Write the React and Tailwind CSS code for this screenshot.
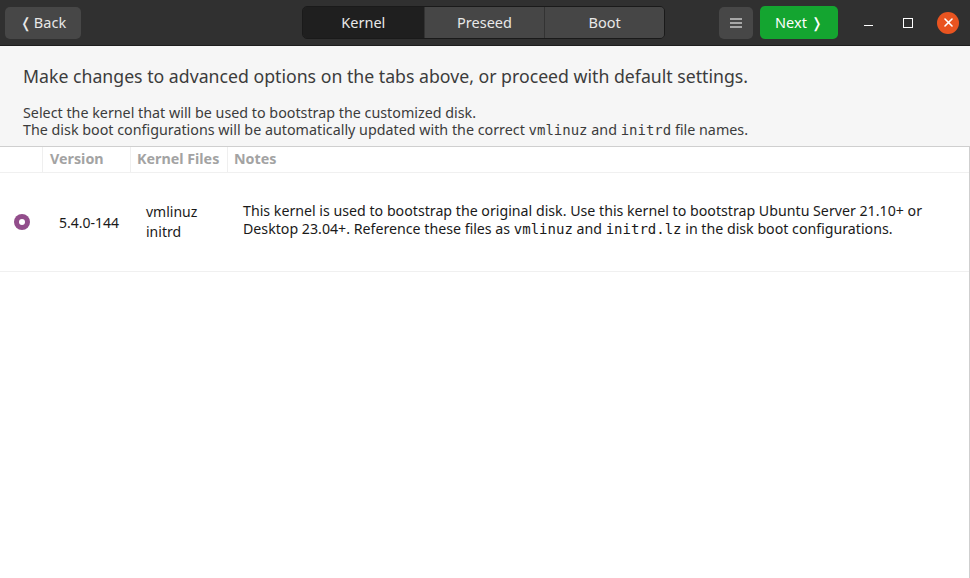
import React from "react";

const mono = { fontFamily: '"DejaVu Sans Mono", "Liberation Mono", monospace' };

function Radio() {
  return (
    <div className="w-4 h-4 rounded-full bg-[#924d8b] flex items-center justify-center">
      <div className="w-[6px] h-[6px] rounded-full bg-white" />
    </div>
  );
}

export default function App() {
  return (
    <div
      className="w-[970px] h-[578px] flex flex-col bg-white overflow-hidden"
      style={{ fontFamily: '"Noto Sans", "Open Sans", sans-serif' }}
    >
      {/* Header bar */}
      <div className="h-[46px] shrink-0 bg-[#303030] border-b border-[#1e1e1e] grid grid-cols-[302px_363px_1fr] items-center">
        <div className="pl-[5px] flex items-center">
          <button className="h-[32px] w-[76px] rounded-[5px] bg-[#474747] text-[#e8e8e8] text-[14.5px] flex items-center justify-center gap-[2px]">
            <span className="text-[14px] leading-none">❬</span>
            <span>Back</span>
          </button>
        </div>
        <div className="flex h-[33px] rounded-[5px] overflow-hidden border border-[#1a1a1a] text-[14.5px] text-[#e8e8e8]">
          <div className="w-[121px] bg-[#1f1f1f] flex items-center justify-center">Kernel</div>
          <div className="w-[121px] bg-[#464646] border-l border-[#333] flex items-center justify-center">Preseed</div>
          <div className="w-[120px] bg-[#464646] border-l border-[#333] flex items-center justify-center">Boot</div>
        </div>
        <div className="flex items-center pl-[54px]">
          <div className="flex items-center gap-[7px]">
            <button className="h-[32px] w-[34px] rounded-[5px] bg-[#474747] flex items-center justify-center">
              <svg width="12" height="10" viewBox="0 0 12 10" stroke="#e8e8e8" strokeWidth="1.2">
                <line x1="0" y1="1" x2="12" y2="1" />
                <line x1="0" y1="5" x2="12" y2="5" />
                <line x1="0" y1="9" x2="12" y2="9" />
              </svg>
            </button>
            <button className="h-[33px] w-[78px] rounded-[5px] bg-[#14a530] text-white text-[14.5px] flex items-center justify-center gap-[4px]">
              <span>Next</span>
              <span className="text-[14px] leading-none">❭</span>
            </button>
          </div>
          <div className="flex items-center ml-[22px]">
            <div className="w-4 h-4 flex items-center justify-center">
              <div className="w-[9px] h-[1.5px] bg-white mt-[6px]" />
            </div>
            <div className="w-4 h-4 flex items-center justify-center ml-[24px]">
              <div className="w-[10px] h-[10px] border-[1.5px] border-white" />
            </div>
            <div className="w-[22px] h-[22px] rounded-full bg-[#e95420] flex items-center justify-center ml-[21px]">
              <svg width="9" height="9" viewBox="0 0 9 9" stroke="white" strokeWidth="1.6" strokeLinecap="round">
                <line x1="1" y1="1" x2="8" y2="8" />
                <line x1="8" y1="1" x2="1" y2="8" />
              </svg>
            </div>
          </div>
        </div>
      </div>

      {/* Intro */}
      <div className="h-[100px] shrink-0 bg-[#f6f6f6] px-[23px] pt-[17px] text-[#3c3c3c]">
        <div className="text-[17.7px] leading-[26px]">
          Make changes to advanced options on the tabs above, or proceed with default settings.
        </div>
        <div className="mt-[15px] text-[14.3px] leading-[17px]">
          <div>Select the kernel that will be used to bootstrap the customized disk.</div>
          <div>
            The disk boot configurations will be automatically updated with the correct{" "}
            <span style={mono} className="text-[14px] leading-[17px]">vmlinuz</span> and{" "}
            <span style={mono} className="text-[14px] leading-[17px]">initrd</span> file names.
          </div>
        </div>
      </div>

      {/* Table */}
      <div className="flex-1 border-t border-r border-[#cfcfcf] bg-white">
        <div className="h-[26px] flex border-b border-[#f0f0f0] text-[14.3px] font-bold text-[#a3a3a3]">
          <div className="w-[43px] border-r border-[#efefef]" />
          <div className="w-[88px] border-r border-[#efefef] pl-[7px] flex items-center pb-[1px]">Version</div>
          <div className="w-[97px] border-r border-[#efefef] pl-[6px] flex items-center pb-[1px]">Kernel Files</div>
          <div className="flex-1 pl-[6px] flex items-center pb-[1px]">Notes</div>
        </div>
        <div className="h-[99px] flex items-center border-b border-[#f0f0f0] text-[14px] text-[#1a1a1a]">
          <div className="w-[43px] flex justify-center pl-[1px] pb-[1px]">
            <Radio />
          </div>
          <div className="w-[103px] pl-[16px]">5.4.0-144</div>
          <div className="w-[97px] leading-[20px]">
            <div>vmlinuz</div>
            <div>initrd</div>
          </div>
          <div className="flex-1 pr-[30px] pb-[4px] text-[14.2px] leading-[18px]">
            This kernel is used to bootstrap the original disk. Use this kernel to bootstrap Ubuntu Server 21.10+ or
            Desktop 23.04+. Reference these files as{" "}
            <span style={mono} className="text-[14px] leading-[18px]">vmlinuz</span> and{" "}
            <span style={mono} className="text-[14px] leading-[18px]">initrd.lz</span> in the disk boot configurations.
          </div>
        </div>
      </div>
    </div>
  );
}
